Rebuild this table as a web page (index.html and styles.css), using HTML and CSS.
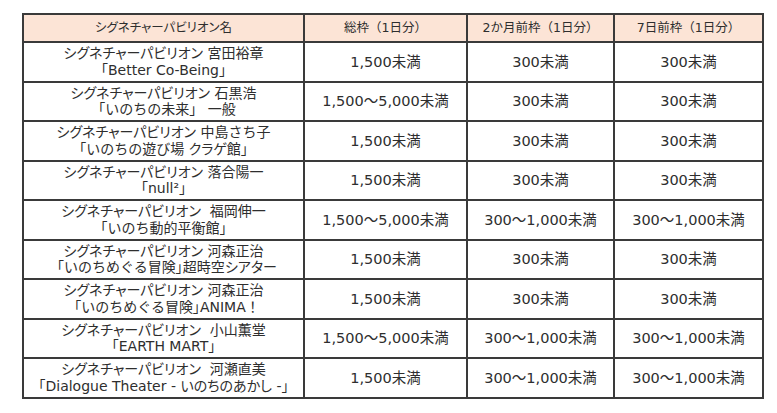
FILE: index.html
```html
<!DOCTYPE html>
<html lang="ja">
<head>
<meta charset="utf-8">
<title>シグネチャーパビリオン</title>
<link rel="stylesheet" href="styles.css">
</head>
<body>
<div class="wrap">
<table class="quota">
  <colgroup>
    <col class="c-name"><col class="c-total"><col class="c-2m"><col class="c-7d">
  </colgroup>
  <thead>
    <tr>
      <th><span class="kana">シグネチャーパビリオン</span>名</th>
      <th>総枠（1日分）</th>
      <th>2か月前枠（1日分）</th>
      <th>7日前枠（1日分）</th>
    </tr>
  </thead>
  <tbody>
    <tr><td class="name"><span class="kana">シグネチャーパビリオン</span> 宮田裕章<br>「Better Co-Being」</td><td>1,500未満</td><td>300未満</td><td>300未満</td></tr>
    <tr><td class="name"><span class="kana">シグネチャーパビリオン</span> 石黒浩<br>「いのちの未来」 一般</td><td>1,500～5,000未満</td><td>300未満</td><td>300未満</td></tr>
    <tr><td class="name"><span class="kana">シグネチャーパビリオン</span> 中島さち子<br>「いのちの遊び場 <span class="kana">クラゲ</span>館」</td><td>1,500未満</td><td>300未満</td><td>300未満</td></tr>
    <tr><td class="name"><span class="kana">シグネチャーパビリオン</span> 落合陽一<br>「null²」</td><td>1,500未満</td><td>300未満</td><td>300未満</td></tr>
    <tr><td class="name"><span class="kana">シグネチャーパビリオン</span>&nbsp; 福岡伸一<br>「いのち動的平衡館」</td><td>1,500～5,000未満</td><td>300～1,000未満</td><td>300～1,000未満</td></tr>
    <tr><td class="name"><span class="kana">シグネチャーパビリオン</span> 河森正治<br>「いのちめぐる冒険<span class="kana">」超時空シアター</span></td><td>1,500未満</td><td>300未満</td><td>300未満</td></tr>
    <tr><td class="name"><span class="kana">シグネチャーパビリオン</span> 河森正治<br>「いのちめぐる冒険<span class="kana">」</span>ANIMA！</td><td>1,500未満</td><td>300未満</td><td>300未満</td></tr>
    <tr><td class="name"><span class="kana">シグネチャーパビリオン</span>&nbsp; 小山薫堂<br>「EARTH MART」</td><td>1,500～5,000未満</td><td>300～1,000未満</td><td>300～1,000未満</td></tr>
    <tr><td class="name"><span class="kana">シグネチャーパビリオン</span>&nbsp; 河瀬直美<br>「Dialogue Theater - <span class="kana">いのちのあかし</span> -」</td><td>1,500未満</td><td>300～1,000未満</td><td>300～1,000未満</td></tr>
  </tbody>
</table>
</div>
</body>
</html>
```

FILE: styles.css
```css
html, body {
  margin: 0;
  padding: 0;
  background: #ffffff;
}

.wrap {
  padding: 13px 0 0 22px;
}

.quota {
  width: 740px;
  table-layout: fixed;
  border-collapse: collapse;
  font-family: "DejaVu Sans", "Noto Sans CJK JP", sans-serif;
  color: #2e2e2e;
  border: 2px solid #3a3a3a;
}

.c-name { width: 281px; }
.c-total { width: 163px; }
.c-2m { width: 147px; }
.c-7d { width: 149px; }

.quota th,
.quota td {
  border: 2px solid #3a3a3a;
  text-align: center;
  vertical-align: middle;
  padding: 0 2px;
  white-space: nowrap;
}

.quota th {
  background: #fce4d6;
  font-weight: normal;
  font-size: 12.5px;
  height: 26px;
  line-height: 16px;
}

.quota td {
  font-size: 14.5px;
  height: 37.5px;
  line-height: 16.5px;
}

.quota td.name {
  font-size: 14px;
}

.kana {
  font-feature-settings: "palt";
}
```
